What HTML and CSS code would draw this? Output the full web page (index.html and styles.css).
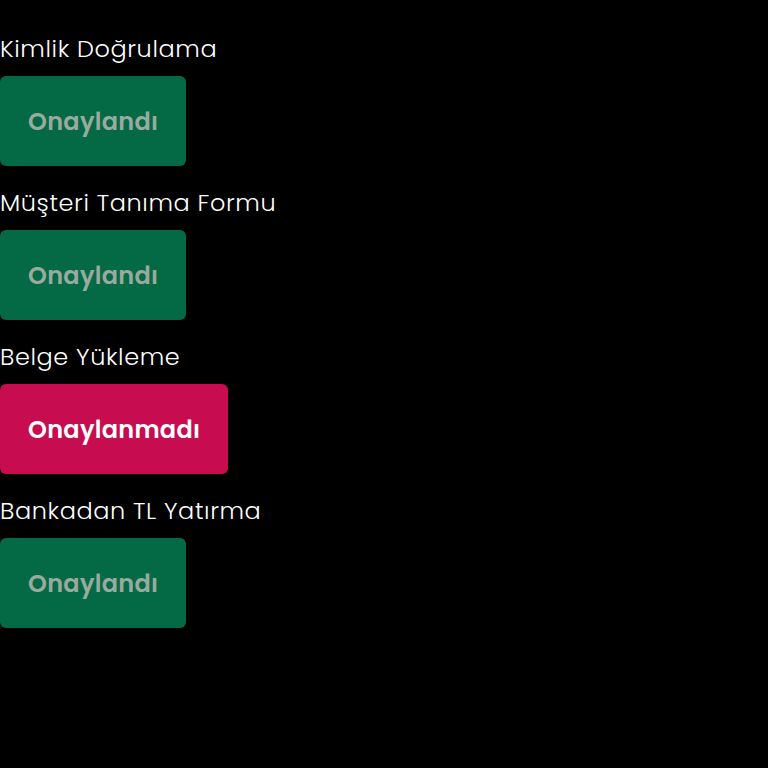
FILE: index.html
```html
<!DOCTYPE html>
<html lang="tr">
<head>
    <meta charset="UTF-8">
    <meta name="viewport" content="width=device-width, initial-scale=1.0">
    <title>Hesap Doğrulama</title>
    <link rel="stylesheet" href="styles.css">
</head>
<body>
    <div class="steps">
        <div class="step">
            <div class="step-title">Kimlik Doğrulama</div>
            <button class="status approved">Onaylandı</button>
        </div>
        <div class="step">
            <div class="step-title">Müşteri Tanıma Formu</div>
            <button class="status approved">Onaylandı</button>
        </div>
        <div class="step">
            <div class="step-title">Belge Yükleme</div>
            <button class="status rejected">Onaylanmadı</button>
        </div>
        <div class="step">
            <div class="step-title">Bankadan TL Yatırma</div>
            <button class="status approved">Onaylandı</button>
        </div>
    </div>
</body>
</html>
```

FILE: styles.css
```css
body {
    margin: 0;
    background: #000;
    font-family: Poppins, Inter, 'Open Sans', sans-serif;
}

.steps {
    display: flex;
    flex-direction: column;
    padding-top: 34px;
}

.step {
    display: flex;
    flex-direction: column;
    align-items: flex-start;
    height: 154px;
}

.step-title {
    color: #fff;
    font-size: 24px;
    font-weight: 300;
    line-height: 30px;
    margin-bottom: 12px;
    letter-spacing: 0.6px;
}

.status {
    height: 90px;
    padding: 0 28px;
    font-family: inherit;
    font-size: 24px;
    font-weight: 600;
    letter-spacing: 0.3px;
    border: none;
    border-radius: 6px;
    cursor: pointer;
}

.approved {
    background: #046a45;
    color: #9aaa9f;
}

.rejected {
    background: #c80c50;
    color: #fff;
}
```
